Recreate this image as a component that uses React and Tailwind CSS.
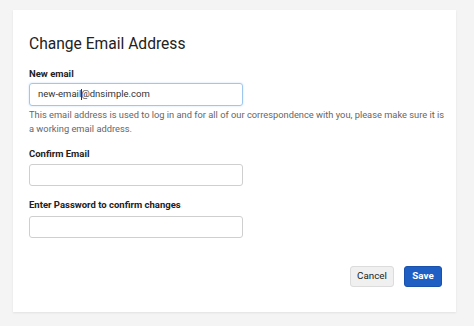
export default function App() {
  return (
    <div className="w-[474px] h-[326px] bg-[#f4f4f4] pt-[10px] pl-[13px] pr-[18px] font-['Roboto',sans-serif]">
      <div className="bg-white h-[302px] pt-[24px] pl-[16px] pr-[14px] shadow-[0_1px_2px_rgba(0,0,0,0.08)]">
        <h1 className="text-[15.6px] leading-[20px] text-[#222] mb-[13px]">Change Email Address</h1>

        {/* New email */}
        <label className="block text-[9.5px] leading-[14px] font-bold text-[#222] mb-[2px]">New email</label>
        <div className="w-[214px] h-[23px] rounded-[3px] border border-[#9fc6ec] shadow-[0_0_2px_rgba(80,150,220,0.35)] flex items-center pl-[8px] text-[9.5px] text-[#333]">
          <span>new-email</span>
          <span className="w-px h-[11px] bg-[#333] -mr-px" />
          <span>@dnsimple.com</span>
        </div>
        <p className="mt-[2px] text-[9.3px] leading-[14px] text-[#666] w-[418px]">
          This email address is used to log in and for all of our correspondence with you, please make sure it is a working email address.
        </p>

        {/* Confirm */}
        <label className="block mt-[11px] text-[9.5px] leading-[14px] font-bold text-[#222] mb-[3px]">Confirm Email</label>
        <div className="w-[214px] h-[22px] rounded-[3px] border border-[#cfcfcf]" />

        {/* Password */}
        <label className="block mt-[12px] text-[9.5px] leading-[14px] font-bold text-[#222] mb-[4px]">Enter Password to confirm changes</label>
        <div className="w-[214px] h-[22px] rounded-[3px] border border-[#cfcfcf]" />

        <div className="flex justify-end gap-[10px] mt-[28px]">
          <button className="w-[44px] h-[21px] rounded-[3px] bg-[#f0f0f0] border border-[#dcdcdc] text-[9.8px] text-[#222]">Cancel</button>
          <button className="w-[38px] h-[21px] rounded-[3px] bg-[#1f5fc4] border border-[#1a52ab] text-[9.8px] font-bold text-white">Save</button>
        </div>
      </div>
    </div>
  );
}
